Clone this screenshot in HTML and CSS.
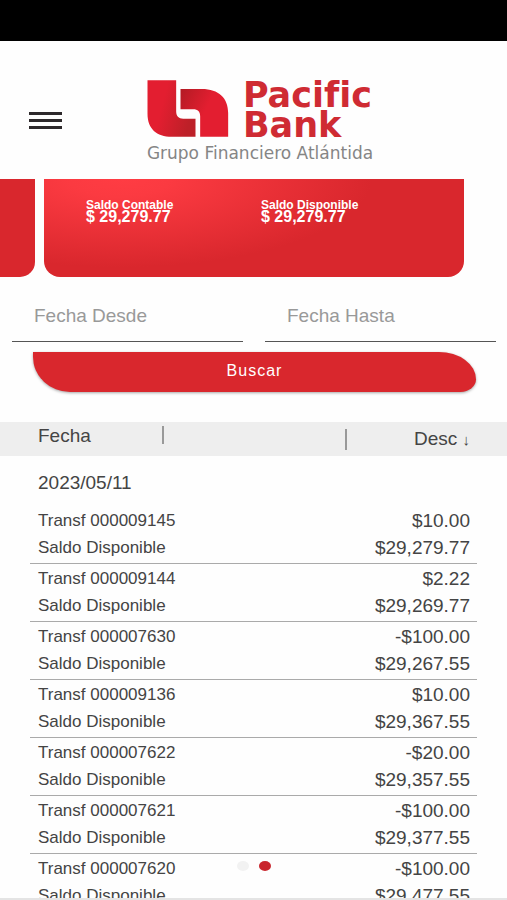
FILE: index.html
```html
<!DOCTYPE html>
<html lang="es">
<head>
<meta charset="utf-8">
<meta name="viewport" content="width=device-width, initial-scale=1">
<title>Pacific Bank</title>
<link rel="stylesheet" href="styles.css">
</head>
<body>
<div class="app">
  <div class="status-bar"></div>
  <header class="top">
    <button class="menu" type="button" aria-label="Menú"><span></span><span></span><span></span></button>
    <div class="brand">
      <div class="brand-main">
        <svg class="brand-mark" viewBox="49 44 243 171" aria-hidden="true">
          <defs>
            <linearGradient id="left" x1="0" y1="0" x2="1" y2="0.3"><stop offset="0.4" stop-color="#e31e30"/><stop offset="1" stop-color="#bd2028"/></linearGradient>
            <linearGradient id="right" x1="0" y1="0" x2="1" y2="0.5"><stop offset="0" stop-color="#b31b24"/><stop offset="0.6" stop-color="#e31e30"/></linearGradient>
          </defs>
          <path fill="url(#left)" d="M49 45H135V138C135 153 142 160 156 160H193V214H122C76 214 49 190 49 145Z"/>
          <path fill="url(#right)" d="M148 71H212C263 71 291 98 291 143V214H207V153C207 139 200 132 186 132H148Z"/>
        </svg>
        <div class="brand-name">Pacific<br>Bank</div>
      </div>
      <div class="brand-group">Grupo Financiero Atlántida</div>
    </div>
  </header>

  <section class="cards">
    <div class="card card-prev"></div>
    <div class="card card-current">
      <div class="balance"><span>Saldo Contable</span><strong>$ 29,279.77</strong></div>
      <div class="balance"><span>Saldo Disponible</span><strong>$ 29,279.77</strong></div>
    </div>
  </section>

  <form class="search">
    <div class="fields">
      <input type="text" placeholder="Fecha Desde" aria-label="Fecha Desde">
      <input type="text" placeholder="Fecha Hasta" aria-label="Fecha Hasta">
    </div>
    <button class="submit" type="button">Buscar</button>
  </form>

  <main class="list">
    <table>
      <thead>
        <tr><th class="col-date"><div>Fecha</div></th><th class="col-mid"></th><th class="col-sort"><div>Desc <small>↓</small></div></th></tr>
      </thead>
      <tbody class="day"><tr><td colspan="3">2023/05/11</td></tr></tbody>
      <tbody class="entry">
        <tr><td colspan="2">Transf 000009145</td><td>$10.00</td></tr>
        <tr><td colspan="2">Saldo Disponible</td><td>$29,279.77</td></tr>
      </tbody>
      <tbody class="entry">
        <tr><td colspan="2">Transf 000009144</td><td>$2.22</td></tr>
        <tr><td colspan="2">Saldo Disponible</td><td>$29,269.77</td></tr>
      </tbody>
      <tbody class="entry">
        <tr><td colspan="2">Transf 000007630</td><td>-$100.00</td></tr>
        <tr><td colspan="2">Saldo Disponible</td><td>$29,267.55</td></tr>
      </tbody>
      <tbody class="entry">
        <tr><td colspan="2">Transf 000009136</td><td>$10.00</td></tr>
        <tr><td colspan="2">Saldo Disponible</td><td>$29,367.55</td></tr>
      </tbody>
      <tbody class="entry">
        <tr><td colspan="2">Transf 000007622</td><td>-$20.00</td></tr>
        <tr><td colspan="2">Saldo Disponible</td><td>$29,357.55</td></tr>
      </tbody>
      <tbody class="entry">
        <tr><td colspan="2">Transf 000007621</td><td>-$100.00</td></tr>
        <tr><td colspan="2">Saldo Disponible</td><td>$29,377.55</td></tr>
      </tbody>
      <tbody class="entry">
        <tr><td colspan="2">Transf 000007620</td><td>-$100.00</td></tr>
        <tr><td colspan="2">Saldo Disponible</td><td>$29,477.55</td></tr>
      </tbody>
    </table>
  </main>
  <div class="dots"><span></span><span class="active"></span></div>
</div>
</body>
</html>
```
FILE: styles.css
```css
* { box-sizing: border-box; }

body {
  margin: 0;
  background: #fefefe;
  color: #444;
  font-family: "Liberation Sans", sans-serif;
}

.app {
  position: relative;
  display: flex;
  flex-direction: column;
  height: 100vh;
  overflow: hidden;
  border-bottom: 2px solid #e4e4e4;
}

.status-bar { flex: none; height: 41px; background: #000; }

.top {
  flex: none;
  display: grid;
  grid-template-columns: 1fr auto 1fr;
  padding: 36px 16px 0 29px;
  height: 138px;
}

.menu {
  display: flex;
  flex-direction: column;
  gap: 4px;
  width: 33px;
  height: 17px;
  margin-top: 35px;
  padding: 0;
  border: 0;
  background: none;
}
.menu span { width: 100%; height: 3px; background: #2d292b; }

.brand-main { display: flex; align-items: center; gap: 14px; height: 62px; }
.brand-mark { width: 82px; height: 57px; }
.brand-name {
  padding-top: 3px;
  color: #cf2b33;
  font: bold 35px/30px "DejaVu Sans", sans-serif;
}
.brand-group {
  color: #858585;
  font: 17px/28px "DejaVu Sans", sans-serif;
  white-space: nowrap;
}

.cards { flex: none; display: flex; gap: 9px; padding-right: 43px; }
.card { height: 98px; background: #d9272d; }
.card-prev { flex: none; width: 35px; border-radius: 0 0 15px 0; }
.card-current {
  flex: 1;
  display: grid;
  grid-template-columns: 175px 1fr;
  padding: 20px 0 0 42px;
  border-radius: 0 0 16px 16px;
  background: radial-gradient(ellipse 60% 90% at 18% 0, #ff3c43 0, #fb3a41 20%, #d9272d 100%);
}
.balance { color: #fff; line-height: 12px; white-space: nowrap; }
.balance span { display: block; font-size: 12px; font-weight: 700; }
.balance strong { display: block; font-size: 16px; font-weight: 700; }

.search { flex: none; padding: 21px 11px 30px 12px; }
.fields { display: grid; grid-template-columns: 1fr 1fr; gap: 22px; }
.fields input {
  min-width: 0;
  height: 44px;
  padding: 0 22px 8px;
  border: 0;
  border-bottom: 1px solid #555;
  border-radius: 0;
  background: none;
  font: 19px/24px "Liberation Sans", sans-serif;
}
.fields input::placeholder { color: #999; opacity: 1; }
.submit {
  display: block;
  width: calc(100% - 41px);
  height: 40px;
  margin: 10px 20px 0 21px;
  padding: 0 0 2px;
  border: 0;
  border-radius: 0 38px 16px 38px / 0 28px 13px 36px;
  background: #d9272d;
  box-shadow: 0 1px 3px rgba(0, 0, 0, 0.35);
  color: #fff;
  font: 16px/20px "Liberation Sans", sans-serif;
  letter-spacing: 1px;
}

.list { flex: 1; min-height: 0; overflow: hidden; padding: 0 30px; }
table { width: 100%; border-collapse: separate; border-spacing: 0; }
thead tr {
  background: #eee;
  box-shadow: 0 0 0 100vmax #eee;
  clip-path: inset(0 -100vmax);
}
th { height: 34px; padding: 0; font-size: 19px; font-weight: 400; vertical-align: top; }
th div { line-height: 20px; }
.col-date { width: 30%; padding: 4px 0 0 8px; text-align: left; }
.col-date div { height: 18px; border-right: 2px solid #999; }
.col-sort { width: 132px; padding: 7px 7px 0 0; text-align: right; }
.col-sort div { border-left: 2px solid #999; }
.col-sort small { font-size: 15px; }

.day td { height: 50px; padding: 3px 8px 0; font-size: 19px; }
.entry td { height: 28px; padding: 0 7px 4px 8px; font-size: 17px; line-height: 22px; }
.entry tr:first-child td { height: 30px; padding-top: 4px; }
.entry tr:last-child td { border-bottom: 1px solid #aaa; }
.entry td:last-child { font-size: 19px; text-align: right; }

.dots {
  position: absolute;
  left: 0;
  right: 0;
  bottom: 27px;
  display: flex;
  justify-content: center;
  gap: 10px;
}
.dots span { width: 12px; height: 10px; border-radius: 50%; background: #f2f2f2; }
.dots .active { background: #c9252d; }
```
